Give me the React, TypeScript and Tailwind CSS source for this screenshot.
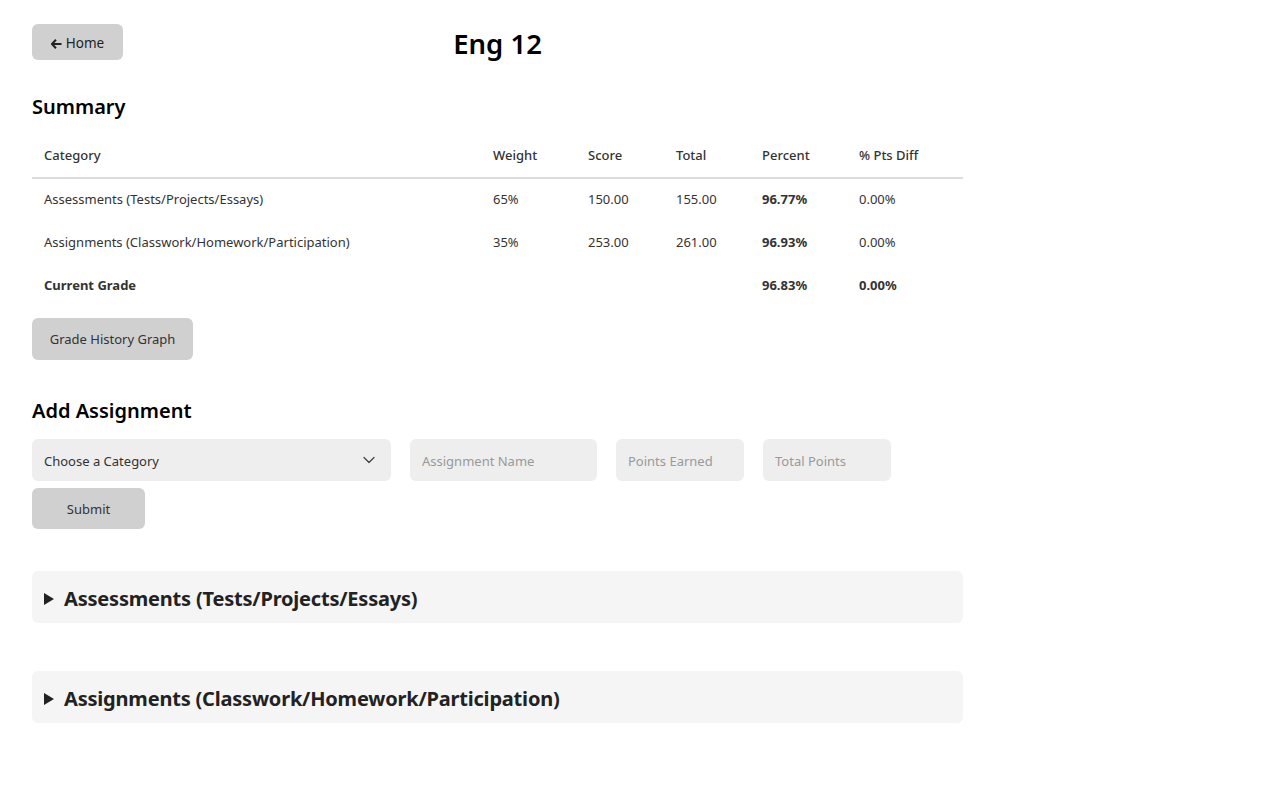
import { ChevronDown } from 'lucide-react';

const rows = [
  { name: 'Assessments (Tests/Projects/Essays)', weight: '65%', score: '150.00', total: '155.00', pct: '96.77%', diff: '0.00%' },
  { name: 'Assignments (Classwork/Homework/Participation)', weight: '35%', score: '253.00', total: '261.00', pct: '96.93%', diff: '0.00%' },
];

const font = { fontFamily: '"Noto Sans", "Open Sans", sans-serif' };

export default function App() {
  return (
    <div className="min-h-screen bg-white text-[#222]" style={font}>
      <div className="w-[931px] ml-8 pt-6">
        {/* header row */}
        <div className="grid grid-cols-[1fr_auto_1fr] items-center">
          <div>
            <button className="h-9 w-[91px] rounded-md bg-[#d0d0d0] text-[13.5px] text-[#222] flex items-center justify-center gap-[4px] pt-[2px]">
              <svg width="11" height="10" viewBox="0 0 11 10" className="mt-[1px]">
                <path d="M5 0.8 L0.8 5 L5 9.2 M1 5 H10.5" stroke="#222" strokeWidth="2" fill="none" strokeLinejoin="miter" />
              </svg>
              <span>Home</span>
            </button>
          </div>
          <h1 className="text-[27.5px] font-semibold text-black leading-none pt-[4px]">Eng 12</h1>
          <div />
        </div>

        {/* summary */}
        <h2 className="mt-[33px] text-[20px] font-semibold text-black leading-[28px]">Summary</h2>
        <table className="mt-[13px] w-full text-[13px] text-[#333] border-collapse">
          <thead>
            <tr className="border-b-2 border-[#dcdcdc] h-[44px] text-left">
              <th className="w-[449px] pl-3 font-medium">Category</th>
              <th className="w-[95px] pl-3 font-medium">Weight</th>
              <th className="w-[88px] pl-3 font-medium">Score</th>
              <th className="w-[86px] pl-3 font-medium">Total</th>
              <th className="w-[97px] pl-3 font-medium">Percent</th>
              <th className="pl-3 font-medium">% Pts Diff</th>
            </tr>
          </thead>
          <tbody>
            {rows.map((r) => (
              <tr key={r.name} className="h-[43px]">
                <td className="pl-3">{r.name}</td>
                <td className="pl-3">{r.weight}</td>
                <td className="pl-3">{r.score}</td>
                <td className="pl-3">{r.total}</td>
                <td className="pl-3 font-bold">{r.pct}</td>
                <td className="pl-3">{r.diff}</td>
              </tr>
            ))}
            <tr className="h-[43px] font-bold">
              <td className="pl-3">Current Grade</td>
              <td />
              <td />
              <td />
              <td className="pl-3">96.83%</td>
              <td className="pl-3">0.00%</td>
            </tr>
          </tbody>
        </table>

        <button className="mt-[11px] h-[42px] w-[161px] rounded-md bg-[#d0d0d0] text-[13px] text-[#333] pt-[2px]">
          Grade History Graph
        </button>

        {/* add assignment */}
        <h2 className="mt-[37px] text-[20px] font-semibold text-black leading-[28px]">Add Assignment</h2>
        <div className="mt-[14px] flex gap-[19px]">
          <div className="h-[42px] w-[359px] rounded-md bg-[#eeeeee] flex items-center justify-between pl-3 pr-3 pt-[3px] text-[13px] text-[#333]">
            <span>Choose a Category</span>
            <ChevronDown className="w-5 h-5 text-[#444] -mt-[3px]" strokeWidth={1.5} />
          </div>
          <input placeholder="Assignment Name" className="h-[42px] w-[187px] rounded-md bg-[#eeeeee] px-3 pt-[2px] text-[13px] placeholder:text-[#999] outline-none" />
          <input placeholder="Points Earned" className="h-[42px] w-[128px] rounded-md bg-[#eeeeee] px-3 pt-[2px] text-[13px] placeholder:text-[#999] outline-none" />
          <input placeholder="Total Points" className="h-[42px] w-[128px] rounded-md bg-[#eeeeee] px-3 pt-[2px] text-[13px] placeholder:text-[#999] outline-none" />
        </div>
        <button className="mt-[7px] h-[41px] w-[113px] rounded-md bg-[#d0d0d0] text-[13px] text-[#333] pt-[2px]">
          Submit
        </button>

        {/* categories */}
        <div className="mt-[42px] flex flex-col gap-[48px]">
          {rows.map((r) => (
            <div key={r.name} className="h-[52px] rounded-md bg-[#f5f5f5] flex items-center pl-3 gap-[10px] pt-[3px]">
              <svg width="10" height="12" viewBox="0 0 10 12">
                <path d="M0 0 L10 6 L0 12 Z" fill="#222" />
              </svg>
              <span className="text-[20px] font-bold text-[#222] tracking-[-0.2px]">{r.name}</span>
            </div>
          ))}
        </div>
      </div>
    </div>
  );
}
